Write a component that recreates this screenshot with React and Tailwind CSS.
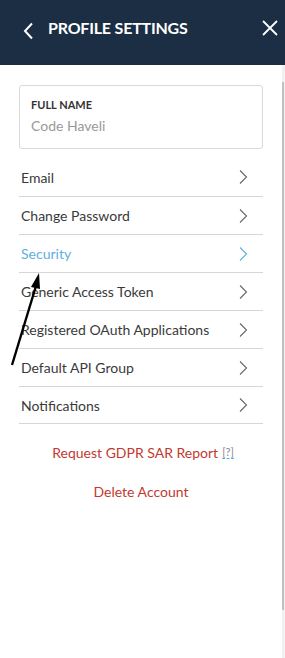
import React from "react";

const Chevron = ({ color = "#666" }) => (
  <svg width="10" height="16" viewBox="0 0 10 16" fill="none">
    <path d="M2 1.5 L8.5 8 L2 14.5" stroke={color} strokeWidth="1.1" />
  </svg>
);

const rows = [
  "Email",
  "Change Password",
  "Security",
  "Generic Access Token",
  "Registered OAuth Applications",
  "Default API Group",
  "Notifications",
];

export default function App() {
  return (
    <div className="relative w-[285px] h-[658px] bg-white overflow-hidden" style={{ fontFamily: "Lato, 'Open Sans', sans-serif" }}>
      <div className="h-[65px] bg-[#1b2e44] flex items-center pl-[22px] pr-[7px] text-white">
        <svg className="mt-[-4px]" width="14" height="18" viewBox="0 0 14 18" fill="none">
          <path d="M10 1.5 L3 9 L10 16.5" stroke="white" strokeWidth="2" />
        </svg>
        <div className="ml-[12px] text-[16px] font-bold tracking-[-0.2px] mt-[-10px]">PROFILE SETTINGS</div>
        <svg className="ml-auto mt-[-9px]" width="16" height="16" viewBox="0 0 16 16" fill="none">
          <path d="M1 1 L15 15 M15 1 L1 15" stroke="white" strokeWidth="1.8" />
        </svg>
      </div>
      <div className="flex h-[593px]">
        <div className="flex-1 pl-[19px] pr-[19px] pt-[20px]">
          <div className="border border-[#d9d9d9] rounded-[3px] h-[64px] pl-[11px] pt-[12px]">
            <div className="text-[11px] font-bold text-[#333] leading-[14px]">FULL NAME</div>
            <div className="text-[14px] text-[#999] mt-[5px] leading-[18px]">Code Haveli</div>
          </div>
          <div className="mt-[9px]">
            {rows.map((r, i) => (
              <div
                key={r}
                className={`h-[38px] flex items-center justify-between pl-[2px] pr-[15px] ${i > 0 ? "border-t border-[#d6d6d6]" : ""} ${i === rows.length - 1 ? "border-b border-[#d6d6d6]" : ""}`}
              >
                <span className={`text-[14px] ${r === "Security" ? "text-[#5eb0e0]" : "text-[#3a3a3a]"}`}>{r}</span>
                <Chevron color={r === "Security" ? "#5eb0e0" : "#666"} />
              </div>
            ))}
          </div>
          <div className="mt-[18px] h-[20px] flex justify-center items-center text-[14px] text-[#c2392f] pl-[4px]">
            <span>Request GDPR SAR Report</span>
            <span className="ml-[4px] text-[11px] text-[#888] border-b border-dashed border-[#5eb0e0] leading-[13px]">[?]</span>
          </div>
          <div className="mt-[20px] h-[20px] leading-[20px] text-center text-[14px] text-[#c2392f]">Delete Account</div>
        </div>
        <div className="w-[3px] bg-[#f1f1f1] flex flex-col">
          <div className="h-[17px]" />
          <div className="w-[2px] h-[528px] bg-[#c1c1c1]" />
        </div>
      </div>
      <svg className="absolute left-0 top-0 pointer-events-none" width="285" height="658">
        <line x1="12" y1="365" x2="36" y2="286" stroke="black" strokeWidth="2.4" />
        <path d="M39 273 L31 287 L40 289 Z" fill="black" />
      </svg>
    </div>
  );
}
